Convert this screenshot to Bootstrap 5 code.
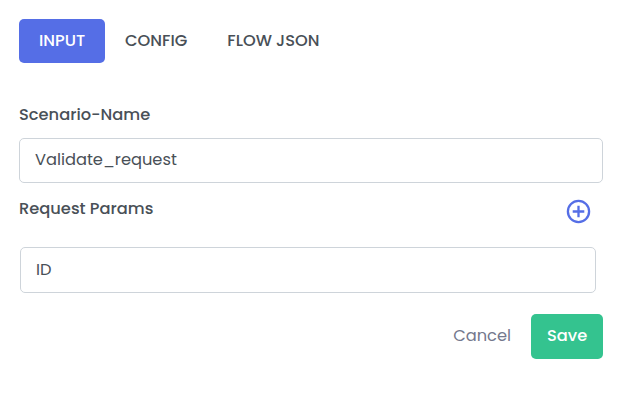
<!DOCTYPE html>
<html lang="en">
<head>
<meta charset="utf-8">
<meta name="viewport" content="width=device-width, initial-scale=1">
<title>Scenario</title>
<link href="https://cdn.jsdelivr.net/npm/bootstrap@5.3.0/dist/css/bootstrap.min.css" rel="stylesheet">
<style>
body{font-family:Poppins,Inter,sans-serif;font-size:16.25px;line-height:24px;color:#495057;background:#fff;overflow:hidden}
.panel{padding:19px 19px 0}
.nav-pills{--bs-nav-pills-border-radius:5px;--bs-nav-pills-link-active-bg:#556ee6;margin-bottom:40px}
.nav-pills .nav-link{height:44px;padding:10px 20px;line-height:24px;font-weight:500;color:#495057}
.nav-pills .nav-link.active{color:#fff}
.form-label{font-weight:500;line-height:24px}
.name-label{height:35px}
.form-control{height:45px;padding:8px 15px 10px;font-size:16.25px;line-height:25px;color:#495057;border:1px solid #ced4da;border-radius:5px}
.params-head{height:64px;padding:14px 12px 0 0}
.param-row{padding:0 7px 0 1px}
.param-row .form-control{height:46px}
.add-btn{margin-top:2px;line-height:0;color:#556ee6}
.actions{padding-top:21px}
.actions .btn{height:45px;padding:0 16px 2px;font-size:16.25px;border:0;border-radius:5px;line-height:42px}
.btn-cancel,.btn-cancel:hover{color:#74788d}
.btn-save,.btn-save:hover{width:72px;background:#34c38f;color:#fff;font-weight:500}
</style>
<script src="https://cdn.jsdelivr.net/npm/bootstrap@5.3.0/dist/js/bootstrap.bundle.min.js"></script>
</head>
<body>
<main class="panel">
  <ul class="nav nav-pills flex-nowrap text-nowrap">
    <li class="nav-item"><a class="nav-link active" href="#">INPUT</a></li>
    <li class="nav-item"><a class="nav-link" href="#">CONFIG</a></li>
    <li class="nav-item"><a class="nav-link" href="#">FLOW JSON</a></li>
  </ul>
  <form>
    <label class="form-label name-label d-block mb-0" for="scenario">Scenario-Name</label>
    <input class="form-control" id="scenario" type="text" value="Validate_request">
    <div class="params-head d-flex justify-content-between align-items-start">
      <label class="form-label mb-0" for="param">Request Params</label>
      <button class="btn p-0 border-0 add-btn" type="button" aria-label="Add parameter">
        <svg width="25" height="25" viewBox="0 0 25 25" fill="none" stroke="currentColor" stroke-width="2.3"><circle cx="12.5" cy="12.5" r="10.6"/><path d="M12.5 6.7v11.6M6.7 12.5h11.6"/></svg>
      </button>
    </div>
    <div class="param-row"><input class="form-control" id="param" type="text" value="ID"></div>
    <div class="actions d-flex justify-content-end gap-1">
      <button class="btn btn-cancel" type="button">Cancel</button>
      <button class="btn btn-save" type="button">Save</button>
    </div>
  </form>
</main>
</body>
</html>
